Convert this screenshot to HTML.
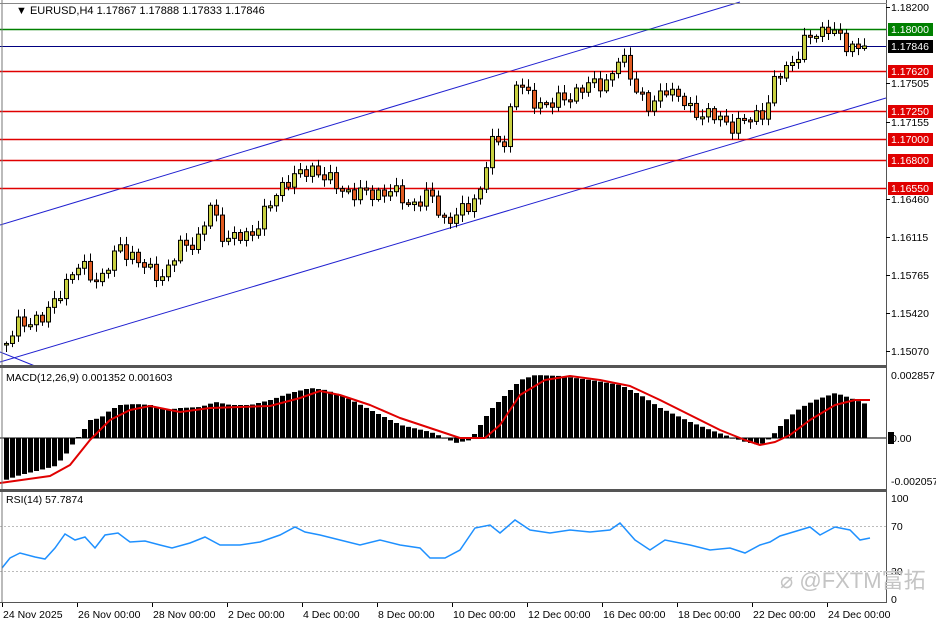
<!DOCTYPE html>
<html><head><meta charset="utf-8">
<style>
html,body{margin:0;padding:0;background:#fff;}
svg{display:block;font-family:"Liberation Sans","Noto Sans CJK SC",sans-serif;}
</style></head>
<body>
<svg id="s" width="936" height="624" viewBox="0 0 936 624" xmlns="http://www.w3.org/2000/svg">
<rect width="936" height="624" fill="#fff"/>
<g id="price"></g>
<g id="macd"></g>
<g id="rsi"></g>
<line x1="2" y1="0" x2="2" y2="603" stroke="#777" stroke-width="1"/>
<line x1="886.5" y1="0" x2="886.5" y2="603" stroke="#555" stroke-width="1"/>
<line x1="0" y1="3.5" x2="887" y2="3.5" stroke="#888" stroke-width="1"/>
<rect x="0" y="365" width="887" height="3" fill="#555"/>
<rect x="0" y="489" width="887" height="3" fill="#555"/>
<line x1="0" y1="602.5" x2="887" y2="602.5" stroke="#555" stroke-width="1"/>
<rect x="14" y="4" width="260" height="14" fill="#fff"/>
<text x="16" y="14" font-size="11" fill="#000">▼ EURUSD,H4  1.17867 1.17888 1.17833 1.17846</text>
<text x="6" y="381" font-size="10.5" fill="#000">MACD(12,26,9) 0.001352 0.001603</text>
<text x="6" y="503" font-size="10.5" fill="#000">RSI(14) 57.7874</text>
<g id="axis" font-size="10.5" fill="#000"></g>
<text x="780" y="588" font-size="22" fill="#c4c4c4">⌀ @FXTM富拓</text>
</svg>
<script>
(function(){
var NS="http://www.w3.org/2000/svg";
function el(p,tag,a,txt){var e=document.createElementNS(NS,tag);for(var k in a)e.setAttribute(k,a[k]);if(txt!=null)e.textContent=txt;p.appendChild(e);return e;}
function interp(P,x){if(x<=P[0][0])return P[0][1];for(var i=1;i<P.length;i++){if(x<=P[i][0]){var t=(x-P[i-1][0])/(P[i][0]-P[i-1][0]);return P[i-1][1]+t*(P[i][1]-P[i-1][1]);}}return P[P.length-1][1];}
var g=document.getElementById('price');
el(g,'line',{x1:0,y1:225,x2:740,y2:2,stroke:'#2020d0','stroke-width':1});
el(g,'line',{x1:0,y1:362,x2:886,y2:98,stroke:'#2020d0','stroke-width':1});
el(g,'line',{x1:0,y1:352,x2:35,y2:366,stroke:'#2020d0','stroke-width':1});
var lv=[[29,'#008000'],[46,'#000080'],[71,'#e00000'],[111,'#e00000'],[139,'#e00000'],[160,'#e00000'],[188,'#e00000']];
lv.forEach(function(l){el(g,'line',{x1:0,y1:l[0]+.5,x2:886,y2:l[0]+.5,stroke:l[1],'stroke-width':l[1]=='#000080'?1:1.6});});
var PP=[[5,345],[20,322],[45,318],[60,290],[80,265],[100,282],[120,245],[140,265],[165,277],[180,245],[200,240],[210,205],[225,240],[250,235],[270,205],[285,180],[300,175],[315,168],[340,190],[370,195],[390,190],[410,205],[430,195],[445,222],[465,210],[480,190],[490,145],[505,140],[515,80],[530,100],[550,105],[570,95],[590,85],[610,80],[620,55],[635,85],[650,112],[665,85],[690,110],[710,115],[730,125],[750,120],[765,110],[775,80],[790,65],[805,40],[820,33],[830,24],[845,48],[860,46],[868,45]];
var prev=interp(PP,0);
for(var i=0;i<144;i++){var x=6+6*i;var c=interp(PP,x)+6*Math.sin(i*2.3)+3*Math.sin(i*5.1);
if(i==143)c=46;var o=prev;prev=c;var bt=Math.min(o,c),bb=Math.max(o,c);if(bb-bt<1.5){bb=bt+2;}
var hi=bt-2-Math.abs(6*Math.sin(i*3.7)),lo=bb+2+Math.abs(5*Math.cos(i*1.9));
el(g,'line',{x1:x+.5,y1:hi,x2:x+.5,y2:lo,stroke:'#000','stroke-width':1});
el(g,'rect',{x:x-1.5,y:bt,width:4,height:bb-bt,fill:c<o?'#c8d040':'#e05a20',stroke:'#000','stroke-width':1});}
var m=document.getElementById('macd');
var MH=[[5,480],[20,475],[40,470],[55,466],[65,455],[75,440],[80,435],[90,420],[100,418],[110,410],[120,405],[135,404],[150,405],[165,410],[180,408],[200,407],[215,402],[230,405],[250,405],[270,400],[290,393],[310,388],[325,390],[345,397],[370,410],[400,425],[430,432],[445,438],[455,443],[470,440],[480,425],[490,410],[505,395],[520,380],[535,375],[560,376],[590,380],[620,385],[640,395],[660,408],[690,422],[710,430],[730,437],[745,442],[760,445],[770,438],[785,420],[800,408],[815,400],[835,393],[850,398],[868,405]];
for(var i=0;i<144;i++){var x=6+6*i;var y=interp(MH,x);var t1=Math.min(y,438),b1=Math.max(y,438);if(b1-t1<1)b1=t1+1;
el(m,'rect',{x:x-2,y:t1,width:5,height:b1-t1,fill:'#000'});}
el(m,'line',{x1:0,y1:438,x2:886,y2:438,stroke:'#000','stroke-width':1});
var SG=[[0,483],[50,476],[70,465],[90,440],[110,420],[130,410],[150,406],[180,412],[210,408],[240,407],[270,406],[300,398],[320,391],[340,395],[370,405],[400,418],[430,428],[460,438],[485,438],[500,425],[520,395],[545,380],[570,376],[600,380],[630,386],[660,400],[690,415],[720,430],[745,440],[760,445],[775,442],[790,435],[810,420],[835,405],[855,400],[870,400]];
el(m,'polyline',{points:SG.map(function(p){return p.join(',')}).join(' '),fill:'none',stroke:'#e00000','stroke-width':2,'stroke-linejoin':'round'});
var r=document.getElementById('rsi');
el(r,'line',{x1:0,y1:526.5,x2:886,y2:526.5,stroke:'#bbb','stroke-dasharray':'2,2'});
el(r,'line',{x1:0,y1:571.5,x2:886,y2:571.5,stroke:'#bbb','stroke-dasharray':'2,2'});
var RS=[[2,568],[10,558],[20,553],[35,557],[45,559],[55,548],[65,534],[75,540],[85,537],[95,548],[105,535],[118,533],[130,542],[145,541],[160,545],[172,548],[190,543],[205,537],[220,545],[240,545],[260,542],[280,535],[295,527],[305,532],[320,535],[340,540],[360,545],[380,540],[400,545],[420,548],[430,558],[445,558],[460,550],[475,528],[490,525],[500,533],[515,520],[530,530],[550,533],[570,530],[590,532],[610,530],[620,523],[635,540],[650,550],[665,540],[690,545],[710,550],[730,548],[745,553],[760,545],[770,542],[780,536],[790,533],[800,530],[810,527],[820,535],[835,527],[850,530],[860,540],[870,538]];
el(r,'polyline',{points:RS.map(function(p){return p.join(',')}).join(' '),fill:'none',stroke:'#1e90ff','stroke-width':1.5});
var a=document.getElementById('axis');
[[7,'1.18200'],[83,'1.17505'],[122,'1.17155'],[199,'1.16460'],[237,'1.16115'],[275,'1.15765'],[313,'1.15420'],[351,'1.15070']].forEach(function(l){
el(a,'line',{x1:886,y1:l[0]+.5,x2:890,y2:l[0]+.5,stroke:'#000'});el(a,'text',{x:891,y:l[0]+4},l[1]);});
[[29,'1.18000','#008000'],[46,'1.17846','#000'],[71,'1.17620','#e00000'],[111,'1.17250','#e00000'],[139,'1.17000','#e00000'],[160,'1.16800','#e00000'],[188,'1.16550','#e00000']].forEach(function(l){
el(a,'rect',{x:888,y:l[0]-6,width:45,height:13,fill:l[2]});el(a,'text',{x:891,y:l[0]+4,fill:'#fff'},l[1]);});
[[375,'0.002857'],[481,'-0.002057'],[498,'100'],[526,'70'],[571,'30'],[599,'0']].forEach(function(l){el(a,'text',{x:891,y:l[0]+4},l[1]);});
el(a,'rect',{x:888,y:432,width:6,height:12,fill:'#000'});el(a,'text',{x:891,y:442},'0.00');
[[2,'24 Nov 2025'],[77,'26 Nov 00:00'],[152,'28 Nov 00:00'],[227,'2 Dec 00:00'],[302,'4 Dec 00:00'],[377,'8 Dec 00:00'],[452,'10 Dec 00:00'],[527,'12 Dec 00:00'],[602,'16 Dec 00:00'],[677,'18 Dec 00:00'],[752,'22 Dec 00:00'],[827,'24 Dec 00:00']].forEach(function(l){
el(a,'line',{x1:l[0]+.5,y1:603,x2:l[0]+.5,y2:607,stroke:'#000'});el(a,'text',{x:l[0]+1,y:618},l[1]);});
})();
</script>
</body></html>
